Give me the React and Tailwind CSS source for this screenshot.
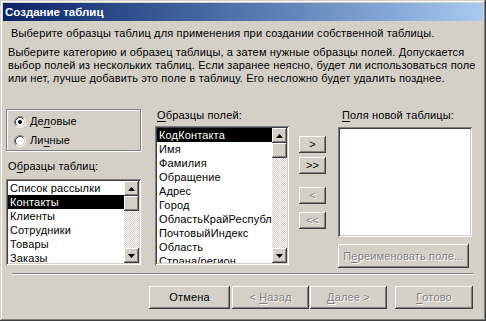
import React from 'react';

const raised =
  'shadow-[inset_-1px_-1px_#404040,inset_1px_1px_#ffffff,inset_-2px_-2px_#808080,inset_2px_2px_#d4d0c8]';
const sunken =
  'shadow-[inset_1px_1px_#808080,inset_-1px_-1px_#ffffff,inset_2px_2px_#404040,inset_-2px_-2px_#d4d0c8]';
const disabledText = 'text-[#808080] [text-shadow:1px_1px_0_#ffffff]';

const tableSamples = ['Список рассылки', 'Контакты', 'Клиенты', 'Сотрудники', 'Товары', 'Заказы'];
const fieldSamples = [
  'КодКонтакта',
  'Имя',
  'Фамилия',
  'Обращение',
  'Адрес',
  'Город',
  'ОбластьКрайРеспублика',
  'ПочтовыйИндекс',
  'Область',
  'Страна/регион',
];

// underlined access key letter
const U = ({ children }) => <span className="underline underline-offset-[2px]">{children}</span>;

const Arrow = ({ down }) => (
  <svg width="7" height="4" viewBox="0 0 7 4">
    {down ? <path d="M0 0h7L3.5 4z" fill="#000" /> : <path d="M0 4h7L3.5 0z" fill="#000" />}
  </svg>
);

const ScrollBar = () => (
  <div className="w-[15px] flex flex-col">
    <div className={`h-[15px] bg-[#d4d0c8] ${raised} flex items-center justify-center`}>
      <Arrow />
    </div>
    <div className={`h-[15px] bg-[#d4d0c8] ${raised}`} />
    <div className="flex-1 bg-[repeating-conic-gradient(#d4d0c8_0%_25%,#ffffff_0%_50%)] bg-[length:2px_2px]" />
    <div className={`h-[15px] bg-[#d4d0c8] ${raised} flex items-center justify-center`}>
      <Arrow down />
    </div>
  </div>
);

const ListBox = ({ items, selected, className }) => (
  <div className={`bg-white p-[2px] flex ${sunken} ${className}`}>
    <div className="flex-1 overflow-hidden">
      {items.map((item, i) => (
        <div
          key={item}
          className={`h-[14px] leading-[14px] pl-[2px] whitespace-nowrap overflow-hidden ${
            i === selected ? 'bg-black text-white' : ''
          }`}
        >
          {item}
        </div>
      ))}
    </div>
    <ScrollBar />
  </div>
);

const Radio = ({ checked }) => (
  <svg width="12" height="12" viewBox="0 0 12 12">
    <circle cx="6" cy="6" r="4.5" fill="#fff" />
    <path d="M2.11 9.89A5.5 5.5 0 0 1 9.89 2.11" stroke="#808080" fill="none" />
    <path d="M9.89 2.11A5.5 5.5 0 0 1 2.11 9.89" stroke="#ffffff" fill="none" />
    <path d="M2.82 9.18A4.5 4.5 0 0 1 9.18 2.82" stroke="#404040" fill="none" />
    <path d="M9.18 2.82A4.5 4.5 0 0 1 2.82 9.18" stroke="#d4d0c8" fill="none" />
    {checked && <circle cx="6" cy="6" r="2" fill="#000" />}
  </svg>
);

const Btn = ({ children, disabled, className }) => (
  <div
    className={`bg-[#d4d0c8] flex items-center justify-center whitespace-nowrap ${raised} ${
      disabled ? disabledText : ''
    } ${className}`}
  >
    {children}
  </div>
);

const App = () => {
  return (
    <div className="w-[486px] h-[321px] bg-[#d4d0c8] p-[3px] flex flex-col overflow-hidden text-[11px] leading-[13px] tracking-[0.15px] text-black font-['Liberation_Sans',Arial,sans-serif] shadow-[inset_-1px_-1px_#404040,inset_1px_1px_#d4d0c8,inset_-2px_-2px_#808080,inset_2px_2px_#ffffff]">
      {/* title bar */}
      <div className="h-[18px] shrink-0 bg-linear-to-r from-[#0a246a] to-[#a6caf0] text-white font-bold text-[11.5px] tracking-normal leading-[18px] pl-[2px]">
        Создание таблиц
      </div>

      <div className="mt-[6px] pl-[8px] h-[13px] whitespace-nowrap">
        Выберите образцы таблиц для применения при создании собственной таблицы.
      </div>
      <div className="mt-[6px] pl-[5px] whitespace-nowrap">
        Выберите категорию и образец таблицы, а затем нужные образцы полей. Допускается
        <br />
        выбор полей из нескольких таблиц. Если заранее неясно, будет ли использоваться поле
        <br />
        или нет, лучше добавить это поле в таблицу. Его несложно будет удалить позднее.
      </div>

      <div className="mt-[24px] flex items-start">
        {/* table samples */}
        <div className="ml-[3px] w-[135px] flex flex-col">
          <div className="h-[42px] border border-[#808080] shadow-[1px_1px_0_#ffffff,inset_1px_1px_0_#ffffff] pl-[7px] pt-[5px] flex flex-col gap-[6px]">
            <div className="h-[13px] flex items-center gap-[4px]">
              <Radio checked />
              <span>
                Де<U>л</U>овые
              </span>
            </div>
            <div className="h-[13px] flex items-center gap-[4px]">
              <Radio />
              <span>
                Ли<U>ч</U>ные
              </span>
            </div>
          </div>
          <div className="mt-[9px] h-[13px] pl-[2px]">
            О<U>б</U>разцы таблиц:
          </div>
          <ListBox items={tableSamples} selected={1} className="mt-[6px] h-[86px]" />
        </div>

        {/* field samples */}
        <div className="ml-[14px] w-[134px] flex flex-col">
          <div className="h-[13px] pl-[2px]">
            <U>О</U>бразцы полей:
          </div>
          <ListBox items={fieldSamples} selected={0} className="mt-[4px] h-[139px]" />
        </div>

        {/* move buttons */}
        <div className="ml-[10px] w-[27px] pt-[27px] flex flex-col">
          <Btn className="h-[17px]">&gt;</Btn>
          <Btn className="h-[17px] mt-[4px]">&gt;&gt;</Btn>
          <Btn disabled className="h-[17px] mt-[13px]">&lt;</Btn>
          <Btn disabled className="h-[17px] mt-[8px]">&lt;&lt;</Btn>
        </div>

        {/* new table fields */}
        <div className="ml-[12px] w-[134px] flex flex-col">
          <div className="h-[13px] pl-[4px]">
            <U>П</U>оля новой таблицы:
          </div>
          <div className={`mt-[5px] h-[110px] bg-white ${sunken}`} />
          <Btn disabled className="mt-[7px] h-[24px] w-[131px]">
            П<U>е</U>реименовать поле...
          </Btn>
        </div>
      </div>

      <div className="mt-[5px] ml-[9px] w-[461px] h-[2px] border-t border-t-[#808080] border-b border-b-white" />

      <div className="mt-[11px] flex h-[23px]">
        <Btn className="ml-[146px] w-[81px]">Отмена</Btn>
        <Btn disabled className="ml-[2px] w-[77px]">
          &lt;&nbsp;<U>Н</U>азад
        </Btn>
        <Btn disabled className="ml-[1px] w-[77px]">
          <U>Д</U>алее&nbsp;&gt;
        </Btn>
        <Btn disabled className="ml-[8px] w-[78px]">
          <U>Г</U>отово
        </Btn>
      </div>
    </div>
  );
};

export default App;
